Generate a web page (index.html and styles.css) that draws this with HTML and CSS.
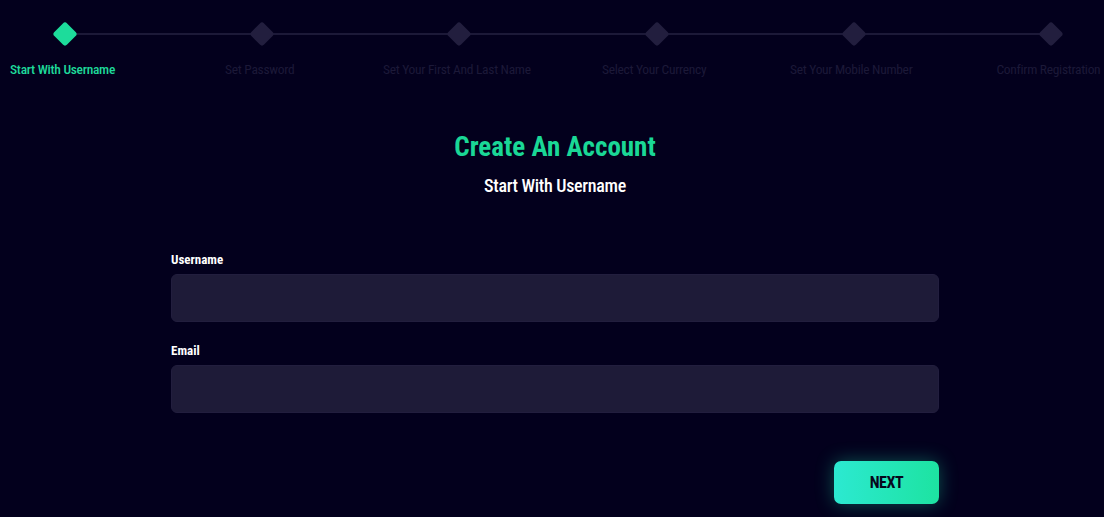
FILE: index.html
```html
<!DOCTYPE html>
<html lang="en">
<head>
<meta charset="utf-8">
<title>Create An Account</title>
<link rel="stylesheet" href="styles.css">
</head>
<body>
<div class="page">
  <nav class="steps">
    <div class="step active"><span class="dot"></span><span class="label">Start With Username</span></div>
    <div class="step"><span class="dot"></span><span class="label">Set Password</span></div>
    <div class="step"><span class="dot"></span><span class="label">Set Your First And Last Name</span></div>
    <div class="step"><span class="dot"></span><span class="label">Select Your Currency</span></div>
    <div class="step"><span class="dot"></span><span class="label">Set Your Mobile Number</span></div>
    <div class="step"><span class="dot"></span><span class="label">Confirm Registration</span></div>
  </nav>
  <main class="form-wrap">
    <h1 class="title">Create An Account</h1>
    <p class="subtitle">Start With Username</p>
    <form class="form">
      <div class="field">
        <label class="field-label" for="username">Username</label>
        <input class="input" id="username" type="text">
      </div>
      <div class="field">
        <label class="field-label" for="email">Email</label>
        <input class="input" id="email" type="email">
      </div>
      <div class="actions">
        <button class="next" type="button">NEXT</button>
      </div>
    </form>
  </main>
</div>
</body>
</html>
```
FILE: styles.css
```css
* { box-sizing: border-box; }
html, body {
  margin: 0;
  padding: 0;
  background: #03001d;
  overflow: hidden;
}
body {
  font-family: Roboto, "Open Sans", sans-serif;
  font-stretch: 75%;
  color: #fff;
  width: 1104px;
  height: 517px;
}
.page {
  display: flex;
  flex-direction: column;
}
.steps {
  position: relative;
  display: grid;
  grid-template-columns: repeat(6, 108px);
  column-gap: 89.2px;
  padding: 21px 0 0 11px;
}
.steps::before {
  content: "";
  position: absolute;
  left: 65px;
  right: 54px;
  top: 33px;
  height: 2px;
  background: #1c1938;
}
.step {
  display: flex;
  flex-direction: column;
  align-items: center;
  position: relative;
}
.dot {
  width: 18px;
  height: 18px;
  margin: 4px 0;
  border-radius: 3px;
  background: #221e3e;
  transform: rotate(45deg);
}
.step.active .dot { background: #1ddc9b; }
.label {
  margin-top: 13px;
  white-space: nowrap;
  font-size: 13.5px;
  line-height: 18px;
  letter-spacing: -0.3px;
  color: #1c1938;
  margin-right: 5px;
}
.step.active .label { color: #1ed99a; font-weight: 500; }
.form-wrap {
  margin: 52px 0 0 171px;
  width: 768px;
  display: flex;
  flex-direction: column;
  align-items: center;
}
.title {
  margin: 0;
  font-size: 27px;
  line-height: 34px;
  font-weight: 700;
  color: #1ad796;
}
.subtitle {
  margin: 10px 0 0;
  font-size: 18px;
  line-height: 24px;
  letter-spacing: -0.3px;
  font-weight: 500;
  color: #fff;
}
.form {
  margin-top: 54px;
  width: 100%;
  display: flex;
  flex-direction: column;
  gap: 21px;
}
.field {
  display: flex;
  flex-direction: column;
  gap: 6px;
}
.field-label {
  font-size: 13px;
  line-height: 16px;
  font-weight: 700;
  color: #fff;
}
.input {
  height: 48px;
  width: 100%;
  border: 1px solid #221e3e;
  border-radius: 6px;
  background: #1e1b38;
  color: #fff;
  font: inherit;
  padding: 0 14px;
  outline: none;
}
.actions {
  display: flex;
  justify-content: flex-end;
  margin-top: 27px;
}
.next {
  width: 105px;
  height: 43px;
  border: none;
  border-radius: 7px;
  background: linear-gradient(90deg, #2ce9d1 0%, #1de3a1 100%);
  box-shadow: 0 0 18px rgba(29, 227, 170, 0.35);
  color: #07071c;
  font-family: inherit;
  font-stretch: 75%;
  font-size: 16px;
  letter-spacing: -0.4px;
  font-weight: 700;
  cursor: pointer;
}
```
